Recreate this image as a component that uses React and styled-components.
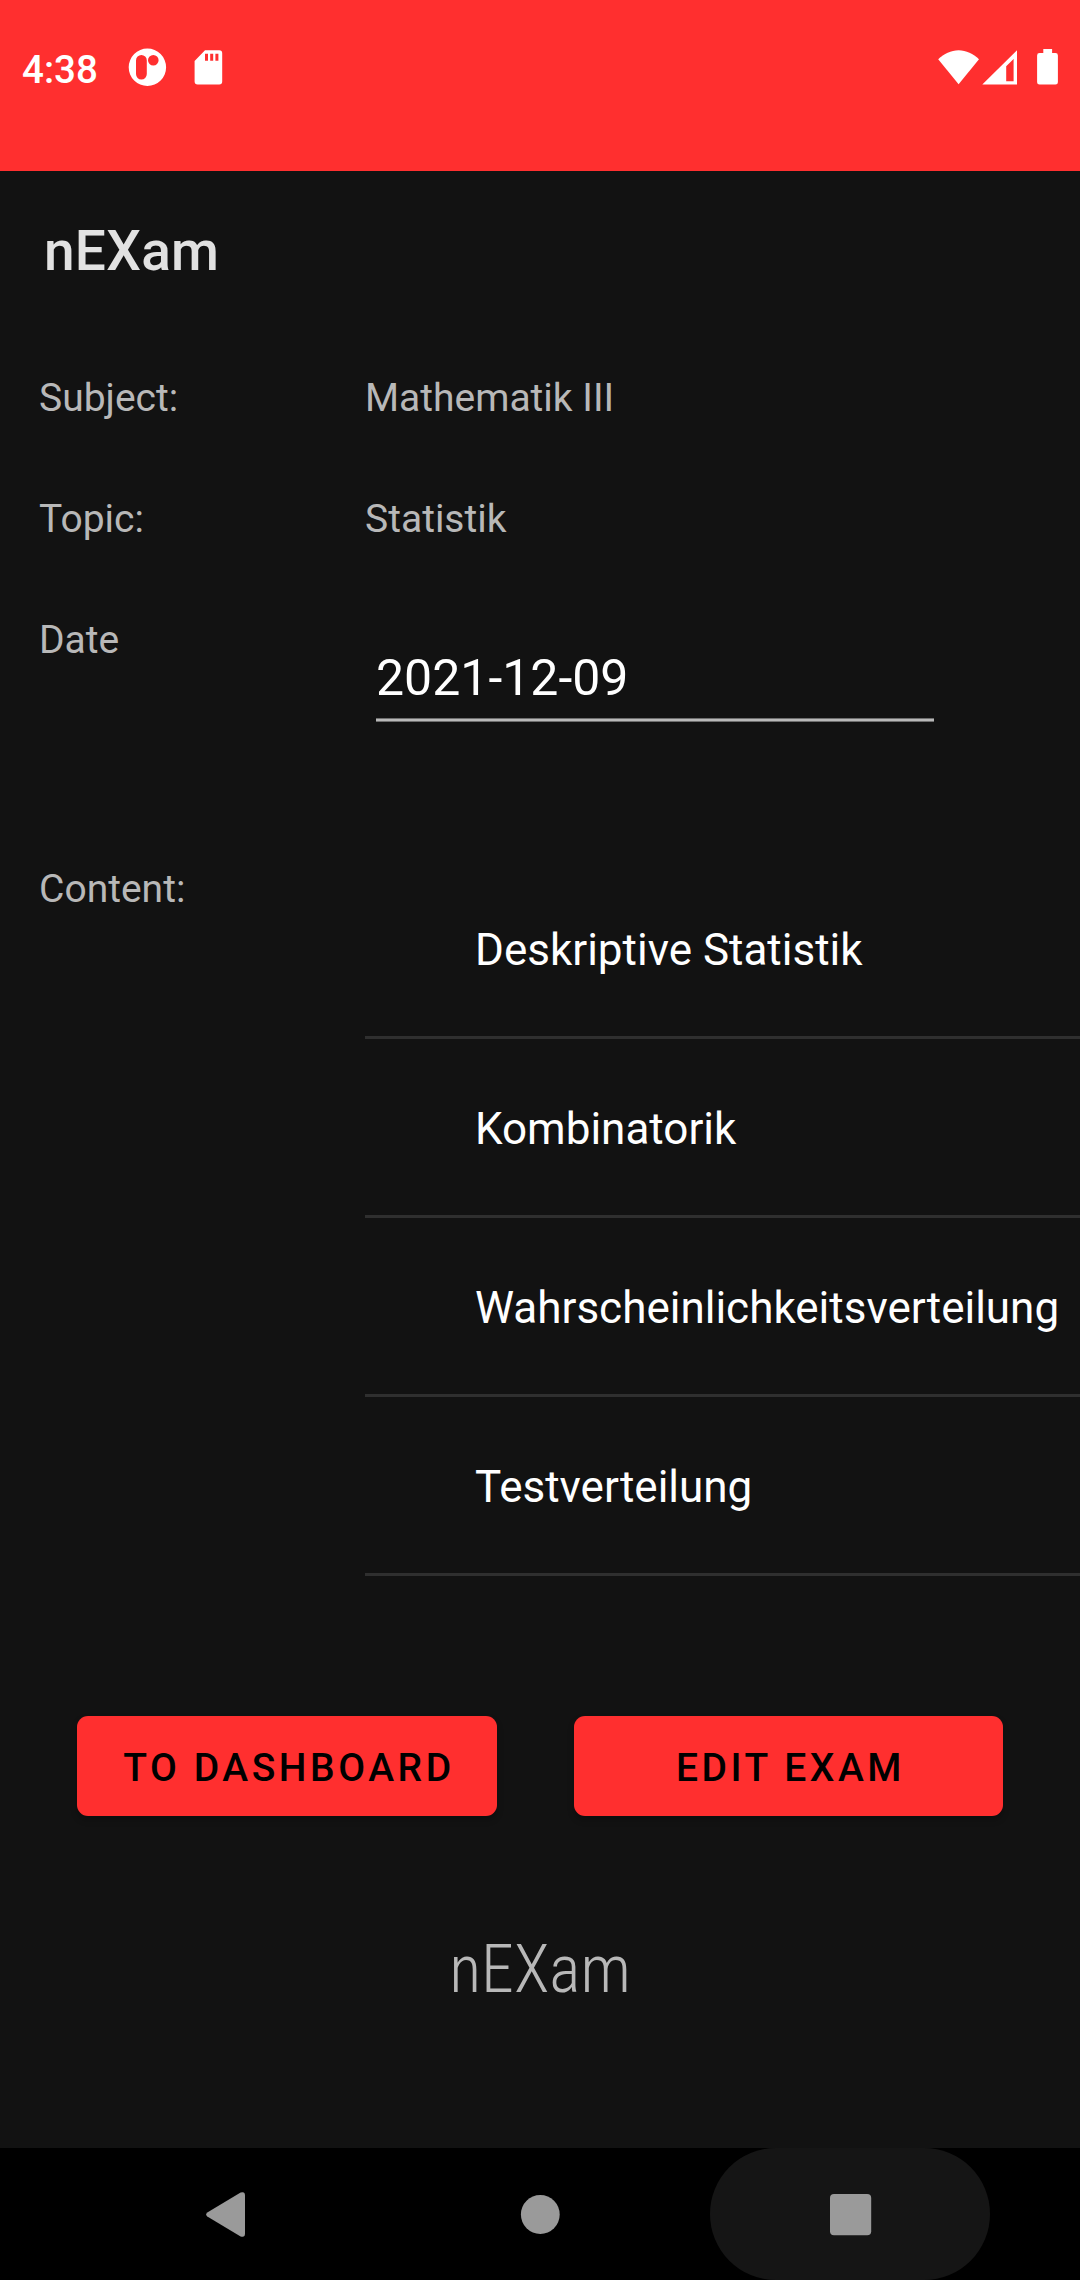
import React from "react";
import styled, { createGlobalStyle } from "styled-components";

const GlobalStyle = createGlobalStyle`
  *, *::before, *::after { box-sizing: border-box; }
  body { margin: 0; background: #121212; }
`;

const Screen = styled.div`
  display: flex;
  flex-direction: column;
  width: 1080px;
  height: 2280px;
  overflow: hidden;
  background: #121212;
  color: #b8b8b8;
  font-family: Roboto, "Noto Sans", sans-serif;
`;

const StatusBar = styled.header`
  display: flex;
  align-items: flex-start;
  justify-content: space-between;
  flex: none;
  height: 171px;
  padding: 45px 22px 0;
  background: #ff2f2f;
  color: #fff;
`;

const StatusGroup = styled.div`
  display: flex;
  align-items: center;
  height: 44px;
`;

const Clock = styled.span`
  width: 106px;
  padding-top: 5px;
  font-size: 38.5px;
  font-weight: 500;
  line-height: 46px;
`;

const Glyph = styled.svg`
  display: block;
  flex: none;
  fill: currentColor;
  margin-left: ${(p) => p.$gap || 0}px;
`;

const AppBar = styled.h1`
  flex: none;
  height: 160px;
  margin: 0;
  padding-left: 44px;
  color: #e1e1e1;
  font-size: 55px;
  font-weight: 500;
  line-height: 160px;
  letter-spacing: 0.25px;
`;

const Details = styled.main`
  display: flex;
  flex-direction: column;
  flex: 1;
  padding-top: 41px;
`;

const Row = styled.div`
  display: grid;
  grid-template-columns: 326px 1fr;
  align-items: start;
  flex: none;
  height: ${(p) => p.$height}px;
  padding-left: 39px;
`;

const Label = styled.div`
  padding-top: ${(p) => p.$offset || 0}px;
  font-size: 39px;
  line-height: 52px;
`;

const DateField = styled.div`
  width: 558px;
  margin: 35px 0 0 11px;
  padding-bottom: 12px;
  border-bottom: 2px solid #b8b8b8;
  box-shadow: 0 1px 0 #6f6f6f, inset 0 -1px 0 #6f6f6f;
  color: #fff;
  font-size: 50px;
  line-height: 58px;
`;

const TopicList = styled.ul`
  margin: 0;
  padding: 0;
  list-style: none;
`;

const TopicItem = styled.li`
  height: 179px;
  padding: 4px 0 0 110px;
  border-bottom: 3px solid #2f2f2f;
  color: #fff;
  font-size: 44px;
  line-height: 172px;
  white-space: nowrap;
`;

const Actions = styled.div`
  display: grid;
  grid-template-columns: 420px 429px;
  column-gap: 77px;
  margin: 140px 0 0 77px;
`;

const ActionButton = styled.button`
  height: 100px;
  padding: 4px 0 0 4px;
  border: 0;
  border-radius: 11px;
  background: #ff2f2f;
  color: #000;
  box-shadow: 0 4px 6px rgba(0, 0, 0, 0.25);
  font-family: inherit;
  font-size: 39px;
  font-weight: 500;
  line-height: 46px;
  letter-spacing: 0.0905em;
  text-transform: uppercase;
  white-space: nowrap;
`;

const Brand = styled.div`
  margin-top: 115px;
  color: #b8b8b8;
  font-family: "Roboto Condensed", Roboto, sans-serif;
  font-size: 66px;
  font-weight: 300;
  font-stretch: 75%;
  line-height: 78px;
  text-align: center;
`;

const NavBar = styled.nav`
  display: grid;
  grid-template-columns: repeat(3, 280px);
  justify-content: center;
  column-gap: 30px;
  flex: none;
  height: 132px;
  background: #000;
  color: #9a9a9a;
`;

const NavButton = styled.button`
  display: flex;
  align-items: center;
  justify-content: center;
  padding: 0;
  border: 0;
  border-radius: 66px;
  background: ${(p) => (p.$pressed ? "#151515" : "transparent")};
  color: inherit;
`;

const topics = [
  "Deskriptive Statistik",
  "Kombinatorik",
  "Wahrscheinlichkeitsverteilung",
  "Testverteilung",
];

export default function App() {
  return (
    <Screen>
      <GlobalStyle />
      <StatusBar>
        <StatusGroup>
          <Clock>4:38</Clock>
          <Glyph width="39" height="38" viewBox="128 48 39 38">
            <path
              fillRule="evenodd"
              d="M147.4 48.6a18.7 18.7 0 1 1 0 37.4a18.7 18.7 0 1 1 0-37.4zM141.4 55a5.4 5.4 0 0 0-5.4 5.4v13.7a5.4 5.4 0 0 0 10.8 0V60.4a5.4 5.4 0 0 0-5.4-5.4zM153.3 55a5.3 5.3 0 1 0 0 10.6a5.3 5.3 0 1 0 0-10.6z"
            />
          </Glyph>
          <Glyph $gap={27} width="29" height="38" viewBox="194 48 29 38">
            <path
              fillRule="evenodd"
              d="M205 50.3h14.2a3 3 0 0 1 3 3v28.2a3 3 0 0 1-3 3h-21.6a3 3 0 0 1-3-3V61zM205 53.7v7h3v-7zM210.2 53.7v7h3v-7zM215.4 53.7v7h3v-7z"
            />
          </Glyph>
        </StatusGroup>
        <StatusGroup>
          <Glyph width="42" height="38" viewBox="938 48 42 38">
            <path d="M958.6 84.3L938.2 59.3C944 54 951 50.3 958.6 50.3S973.2 54 979 59.3z" />
          </Glyph>
          <Glyph $gap={2} width="36" height="38" viewBox="982 48 36 38">
            <path
              fillRule="evenodd"
              d="M982.3 84.6L1017 50.2V84.6zM1006.2 66.3V81.2H1013.6V59z"
            />
          </Glyph>
          <Glyph $gap={19} width="21" height="38" viewBox="1037 48 21 38">
            <path d="M1043.3 53v-3.9h8.8V53h3.4a2.4 2.4 0 0 1 2.4 2.4v26.8a2.4 2.4 0 0 1-2.4 2.4h-16a2.4 2.4 0 0 1-2.4-2.4V55.4a2.4 2.4 0 0 1 2.4-2.4z" />
          </Glyph>
        </StatusGroup>
      </StatusBar>
      <AppBar>nEXam</AppBar>
      <Details>
        <Row $height={121}>
          <Label>Subject:</Label>
          <Label>Mathematik III</Label>
        </Row>
        <Row $height={121}>
          <Label>Topic:</Label>
          <Label>Statistik</Label>
        </Row>
        <Row $height={246}>
          <Label>Date</Label>
          <DateField>2021-12-09</DateField>
        </Row>
        <Row $height={716}>
          <Label $offset={3}>Content:</Label>
          <TopicList>
            {topics.map((topic) => (
              <TopicItem key={topic}>{topic}</TopicItem>
            ))}
          </TopicList>
        </Row>
        <Actions>
          <ActionButton>To Dashboard</ActionButton>
          <ActionButton>Edit Exam</ActionButton>
        </Actions>
        <Brand>nEXam</Brand>
      </Details>
      <NavBar>
        <NavButton aria-label="Back">
          <Glyph width="70" height="46" viewBox="195 2191 70 46">
            <path d="M207.3 2212.6L240.6 2192.6Q245 2190.9 245 2195.5V2233.5Q245 2238 240.6 2236.4L207.3 2216.4Q205 2214.5 207.3 2212.6z" />
          </Glyph>
        </NavButton>
        <NavButton aria-label="Home">
          <Glyph width="40" height="40" viewBox="0 0 40 40">
            <circle cx="20.3" cy="20.5" r="19.4" />
          </Glyph>
        </NavButton>
        <NavButton aria-label="Recents" $pressed>
          <Glyph width="44" height="44" viewBox="0 0 44 44">
            <rect x="2" y="2" width="41.2" height="41.2" rx="4" />
          </Glyph>
        </NavButton>
      </NavBar>
    </Screen>
  );
}
